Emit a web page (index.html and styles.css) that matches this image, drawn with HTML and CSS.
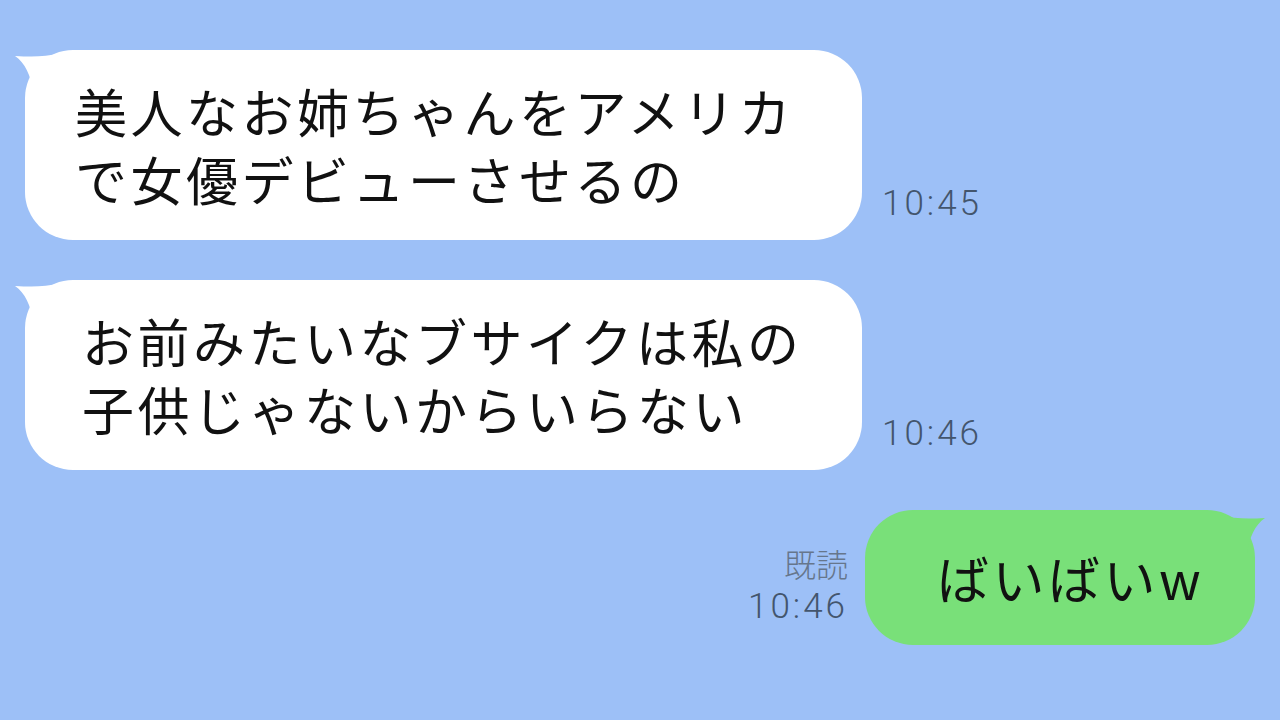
FILE: index.html
```html
<!DOCTYPE html>
<html lang="ja">
<head>
    <meta charset="UTF-8">
    <meta name="viewport" content="width=device-width, initial-scale=1.0">
    <title>トーク</title>
    <link rel="stylesheet" href="styles.css">
</head>
<body>
    <div class="chat">
        <div class="row left">
            <div class="bubble white">
                <svg class="tail" width="50" height="50" viewBox="0 0 50 50">
                    <path d="M45 0 C30 4 18 4 0 3 C10 10 16 22 18 40 L45 40 Z" fill="#fff"/>
                </svg>
                <p>美人なお姉ちゃんをアメリカ<br>で女優デビューさせるの</p>
            </div>
            <div class="meta">
                <span>10:45</span>
            </div>
        </div>

        <div class="row left">
            <div class="bubble white">
                <svg class="tail" width="50" height="50" viewBox="0 0 50 50">
                    <path d="M45 0 C30 4 18 4 0 3 C10 10 16 22 18 40 L45 40 Z" fill="#fff"/>
                </svg>
                <p class="indent">お前みたいなブサイクは私の<br>子供じゃないからいらない</p>
            </div>
            <div class="meta">
                <span>10:46</span>
            </div>
        </div>

        <div class="row right">
            <div class="meta">
                <span class="read">既読</span>
                <span>10:46</span>
            </div>
            <div class="bubble green">
                <svg class="tail" width="50" height="50" viewBox="0 0 50 50">
                    <path d="M5 0 C20 4 32 4 50 3 C40 10 34 22 32 40 L5 40 Z" fill="#79e079"/>
                </svg>
                <p>ばいばいw</p>
            </div>
        </div>
    </div>
</body>
</html>
```

FILE: styles.css
```css
body {
    margin: 0;
    padding: 0;
    background-color: #9dc0f7;
    font-family: "Noto Sans CJK JP", "Noto Sans", sans-serif;
    color: #111;
}
.chat {
    display: flex;
    flex-direction: column;
    gap: 40px;
    padding: 50px 25px 0 25px;
    height: 720px;
    box-sizing: border-box;
}
.row {
    display: flex;
    align-items: flex-end;
    gap: 20px;
}
.row.right {
    justify-content: flex-end;
}
.bubble {
    position: relative;
    border-radius: 48px;
    box-sizing: border-box;
}
.bubble p {
    margin: 0;
    font-size: 52px;
    line-height: 68px;
    letter-spacing: 3.5px;
    white-space: nowrap;
    position: relative;
}
.white {
    background: #fff;
    width: 837px;
    height: 190px;
    padding: 27px 0 0 50px;
}
.white p.indent {
    padding-left: 7px;
}
.green {
    background: #79e079;
    width: 390px;
    height: 135px;
    padding: 34px 0 0 72px;
}
.tail {
    position: absolute;
    top: 3px;
}
.white .tail {
    left: -10px;
}
.green .tail {
    right: -10px;
    top: 5px;
}
.meta {
    display: flex;
    flex-direction: column;
    align-items: flex-end;
    font-family: "Roboto", "Noto Sans CJK JP", sans-serif;
    font-weight: 300;
    font-size: 35px;
    line-height: 44px;
    letter-spacing: 3px;
    color: #43556d;
    padding-bottom: 14px;
}
.right .meta {
    padding-bottom: 16px;
    margin-right: -3px;
}
.meta .read {
    font-family: "Noto Sans CJK JP", sans-serif;
    font-weight: 300;
    font-size: 32px;
    letter-spacing: 0;
    color: #66768c;
}
```
